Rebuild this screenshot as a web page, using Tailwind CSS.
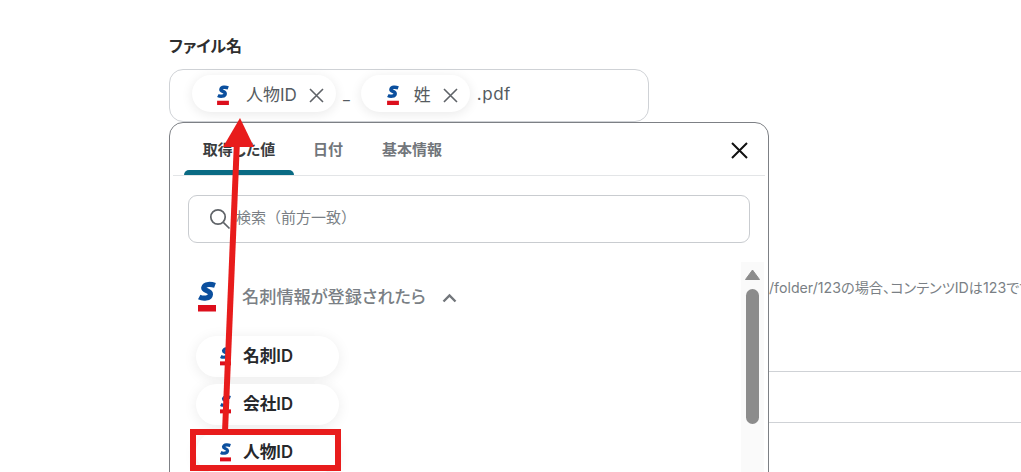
<!DOCTYPE html>
<html lang="ja">
<head>
  <meta charset="UTF-8" />
  <script src="https://cdn.jsdelivr.net/npm/@tailwindcss/browser@4"></script>
  <title>ファイル名</title>
</head>
<body class="bg-white font-['Inter','Noto_Sans_CJK_JP',sans-serif] [font-feature-settings:'palt']">

  <svg class="hidden">
    <symbol id="logo" viewBox="0 0 18 32">
      <path d="M17 4.4C13 3 6.8 2.6 5.8 6.6 5 10 12.8 9.4 12.4 13.4 12 17.6 5 18 1.2 16" fill="none" stroke="#0b4f9e" stroke-width="5.2"/>
      <rect x="0" y="24" width="18" height="6.5" fill="#dc0f1c"/>
    </symbol>
  </svg>

  <div class="relative h-[472px] w-[1021px] overflow-hidden">

    <!-- form behind the popup -->
    <div class="pl-[169px] pt-[36px]">
      <h3 class="text-[16px] leading-[20px] font-semibold text-[#2e2e2e]">ファイル名</h3>
      <div class="mt-[13px] flex h-[53px] w-[480px] items-center rounded-[14px] border border-[#cfd2d6] pl-[22px] pb-[4px]">
        <div class="flex h-[37px] w-[144px] items-center rounded-full bg-white pl-[25px] pt-[3px] shadow-[0_2px_12px_rgba(0,0,0,0.09)]">
          <svg class="h-[21px] w-[12px]"><use href="#logo"/></svg>
          <span class="ml-[17px] pt-[1px] text-[17px] text-[#555b61]">人物ID</span>
          <svg class="ml-[12px] h-[15px] w-[15px]" viewBox="0 0 15 15"><path d="M1 1L14 14M14 1L1 14" stroke="#5f6368" stroke-width="1.6"/></svg>
        </div>
        <span class="ml-[7px] mr-[11px] mt-[3px] text-[15px] text-[#555b61]">_</span>
        <div class="flex h-[37px] w-[109px] items-center rounded-full bg-white pl-[26px] pt-[3px] shadow-[0_2px_12px_rgba(0,0,0,0.09)]">
          <svg class="h-[21px] w-[12px]"><use href="#logo"/></svg>
          <span class="ml-[15px] pt-[1px] text-[17px] text-[#555b61]">姓</span>
          <svg class="ml-[12px] h-[15px] w-[15px]" viewBox="0 0 15 15"><path d="M1 1L14 14M14 1L1 14" stroke="#5f6368" stroke-width="1.6"/></svg>
        </div>
        <span class="ml-[7px] pt-[2px] text-[17px] tracking-[0.5px] text-[#555b61]">.pdf</span>
      </div>

      <p class="mt-[156px] whitespace-nowrap pl-[600px] text-[14.2px] leading-[20px] text-[#7a7f85]">/folder/123の場合、コンテンツIDは123です</p>
      <div class="mt-[73px] h-[1px] bg-[#cfd2d6]"></div>
      <div class="mt-[50px] h-[1px] bg-[#cfd2d6]"></div>
    </div>

    <!-- popup -->
    <div class="absolute left-[169px] top-[122px] h-[400px] w-[600px] rounded-[14px] border border-[#7d8085] bg-white">
      <div class="relative mx-[3px] flex h-[53px] border-b border-[#e3e5e7] text-[15px] font-semibold text-[#72767b]">
        <div class="ml-[11px] flex h-[52px] w-[110px] flex-col text-[#3a3d40]">
          <div class="flex flex-1 items-center justify-center pt-[8px]">取得した値</div>
          <div class="h-[5px] rounded-t-[5px] bg-[#0a6b84]"></div>
        </div>
        <div class="ml-[19px] flex h-[52px] items-center pt-[3px]">日付</div>
        <div class="ml-[39px] flex h-[52px] items-center pt-[3px]">基本情報</div>
        <svg class="absolute left-[558px] top-[19px] h-[17px] w-[17px]" viewBox="0 0 17 17"><path d="M1 1L16 16M16 1L1 16" stroke="#111" stroke-width="2"/></svg>
      </div>

      <div class="mx-[18px] mt-[19px] flex h-[48px] w-[562px] items-center rounded-[9px] border border-[#c9ccd0] pl-[20px]">
        <svg class="h-[22px] w-[22px]" viewBox="0 0 22 22" fill="none" stroke="#5f6368" stroke-width="1.7"><circle cx="9" cy="9" r="7.2"/><path d="M14.3 14.3L20.5 20.5"/></svg>
        <span class="ml-[5px] pb-[2px] text-[15px] [font-feature-settings:normal] text-[#7a7f85]">検索（前方一致）</span>
      </div>

      <div class="relative pt-[38px]">
        <div class="ml-[28px] flex items-center">
          <svg class="h-[32px] w-[18px]"><use href="#logo"/></svg>
          <span class="ml-[26px] text-[17.2px] font-medium text-[#7a7f85]">名刺情報が登録されたら</span>
          <svg class="ml-[16px] mt-[2px] h-[10px] w-[15px]" viewBox="0 0 15 10" fill="none" stroke="#72767b" stroke-width="2.4"><path d="M1.5 8.5L7.5 2.5L13.5 8.5"/></svg>
        </div>

        <div class="ml-[26px] mt-[23px] flex flex-col gap-[7px]">
          <div class="flex h-[41px] w-[143px] items-center rounded-full bg-white pl-[24px] shadow-[0_2px_14px_rgba(0,0,0,0.08)]">
            <svg class="h-[21px] w-[11px]"><use href="#logo"/></svg>
            <span class="ml-[12px] text-[16.7px] font-semibold text-[#26282b]">名刺ID</span>
          </div>
          <div class="flex h-[41px] w-[143px] items-center rounded-full bg-white pl-[24px] shadow-[0_2px_14px_rgba(0,0,0,0.08)]">
            <svg class="h-[21px] w-[11px]"><use href="#logo"/></svg>
            <span class="ml-[12px] text-[16.7px] font-semibold text-[#26282b]">会社ID</span>
          </div>
          <div class="flex h-[41px] w-[143px] items-center rounded-full bg-white pl-[24px] shadow-[0_2px_14px_rgba(0,0,0,0.08)]">
            <svg class="h-[21px] w-[11px]"><use href="#logo"/></svg>
            <span class="ml-[12px] text-[16.7px] font-semibold text-[#26282b]">人物ID</span>
          </div>
        </div>

        <!-- scrollbar -->
        <div class="absolute left-[571px] top-[19px] flex h-[300px] w-[23px] flex-col items-center bg-[#fafafa] pt-[7px]">
          <svg class="h-[11px] w-[15px]" viewBox="0 0 15 11"><path d="M7.5 1L14.5 10.5H0.5Z" fill="#8c8c8c" stroke="#8c8c8c" stroke-linejoin="round"/></svg>
          <div class="mt-[9px] h-[135px] w-[13px] rounded-full bg-[#8c8c8c]"></div>
        </div>
      </div>
    </div>

    <!-- annotation: red box and arrow -->
    <div class="absolute left-[190px] top-[429px] h-[42px] w-[151px] border-[6px] border-[#e81c1c]"></div>
    <svg class="pointer-events-none absolute left-0 top-0 h-[472px] w-[1021px]" viewBox="0 0 1021 472">
      <path d="M225 432L237 140" stroke="#e81c1c" stroke-width="6"/>
      <path d="M240 118L254 147H223Z" fill="#e81c1c"/>
    </svg>
  </div>

</body>
</html>
